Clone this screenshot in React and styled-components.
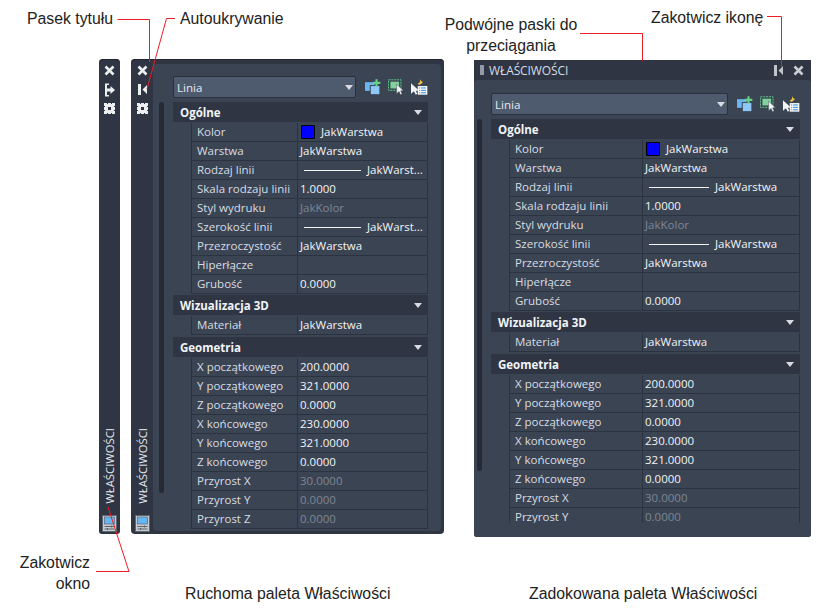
import React from "react";
import styled, { createGlobalStyle } from "styled-components";

const Global = createGlobalStyle`
  html, body { margin: 0; padding: 0; background: #fff; }
  body { font-family: "Liberation Sans", Arial, sans-serif; overflow: hidden; }
`;
const Stage = styled.div`position: relative; width: 822px; height: 610px; overflow: hidden; padding: 59px 0 0 99px; box-sizing: border-box; display: flex; align-items: flex-start;`;
const Strip = styled.div`width: 21px; height: 475px; background: #2f3543; border-radius: 4px 4px 3px 3px; box-shadow: inset 0 1px 0 #23262e; display: flex; flex-direction: column; align-items: center; padding: 2px 0 2px; box-sizing: border-box; margin-right: 11px; flex: none;`;
const IconSlots = styled.div`display: flex; flex-direction: column; align-items: center;`;
const Slot = styled.div`height: 19px; display: flex; align-items: center; justify-content: center;`;
const StripTitle = styled.div`margin-top: auto; writing-mode: vertical-rl; transform: rotate(180deg); color: #e6eaf0; font: 11.3px "Open Sans", sans-serif; margin-bottom: 11px; line-height: 21px; width: 21px; text-align: left;`;
const Floating = styled.div`width: 313px; height: 475px; background: #2f3543; border-radius: 4px; box-shadow: inset 0 1px 0 #23262e; display: flex; flex: none; margin-right: 30px;`;
const FloatingRail = styled.div`width: 22px; display: flex; flex-direction: column; align-items: center; padding: 2px 0 2px; box-sizing: border-box; flex: none;`;
const Docked = styled.div`width: 337px; height: 477px; margin-top: 1px; background: #2f3543; display: flex; flex-direction: column; flex: none; border-radius: 0 0 3px 3px;`;
const DockBar = styled.div`height: 20px; display: flex; align-items: center; padding: 0 7px 0 6px; flex: none; color: #d5dce6; font: 12px "Open Sans", sans-serif;`;
const Grip = styled.div`width: 4px; height: 10px; margin-right: 5px; background-image: radial-gradient(#9aa2ae 0.7px, transparent 0.8px); background-size: 2px 2px;`;
const DockTitle = styled.span`flex: 1; letter-spacing: -0.1px;`;
const DockAnchor = styled.span`display: flex; margin-right: 10px;`;
const Inner = styled.div`flex: 1; min-height: 0; background: #3b4453; border-radius: ${p => p.$radius}; position: relative; padding: ${p => p.$pad}; margin: ${p => p.$margin || 0}; display: flex; flex-direction: column; overflow: hidden;`;
const Track = styled.div`position: absolute; left: ${p => p.$x}px; top: ${p => p.$top}px; width: 5px; height: ${p => p.$h}px; background: #252a35; border-radius: 3px;`;
const ToolRow = styled.div`display: flex; align-items: center; height: 22px; flex: none; margin-bottom: 3px;`;
const Combo = styled.div`flex: 1; height: 22px; box-sizing: border-box; background: #4e5a6e; border: 1px solid #2a303c; border-radius: 2px; display: flex; align-items: center; padding: 0 2px 0 3px; color: #e4e9ef; font: 11.6px "Open Sans", sans-serif; justify-content: space-between;`;
const Arrow = styled.span`width: 0; height: 0; border-left: 4.5px solid transparent; border-right: 4.5px solid transparent; border-top: 5px solid #d7dce2; display: block;`;
const Tools = styled.div`display: flex; gap: 7px; margin-left: 9px; flex: none; width: 63px;`;
const List = styled.div`flex: 1; min-height: 0; overflow: hidden;`;
const Section = styled.div`height: 20px; margin-top: ${p => p.$gap || 1}px; background: #2f3543; display: flex; align-items: center; justify-content: space-between; padding: 0 6px 0 7px; color: #f1f4f7; font: 700 11.5px "Open Sans", sans-serif;`;
const Rows = styled.div`padding: 1px 0 0 18px;`;
const Row = styled.div`display: grid; grid-template-columns: ${p => p.$label}px 1fr; height: 19px; box-sizing: border-box; border-bottom: 1px solid #2c3340; border-left: 1px solid #2c3340; border-right: 1px solid #2c3340; font: 11.5px "Open Sans", sans-serif; color: #d8dde3; line-height: 18px;`;
const Label = styled.div`padding-left: 5px; border-right: 1px solid #2c3340; white-space: nowrap; overflow: hidden;`;
const Value = styled.div`padding-left: 2px; display: flex; align-items: center; white-space: nowrap; overflow: hidden; color: ${p => (p.$dim ? "#7d8794" : "#f2f4f6")};`;
const Swatch = styled.span`width: 14px; height: 14px; background: #0000ff; border: 1px solid #000; box-sizing: border-box; border-radius: 1px; margin: 0 6px 0 1px; flex: none;`;
const LineMark = styled.span`width: ${p => p.$w}px; height: 1px; background: #f2f4f6; margin: 0 6px 0 4px; flex: none;`;
const Note = styled.div`position: absolute; left: ${p => p.$x}px; top: ${p => p.$y}px; width: ${p => p.$w}px; text-align: ${p => p.$align || "left"}; font: 15.8px/21px "Liberation Sans", Arial, sans-serif; color: #222;`;
const Leaders = styled.svg`position: absolute; left: 0; top: 0; pointer-events: none;`;
const Caption = styled.div`position: absolute; top: 583px; left: ${p => p.$x}px; font: 15.8px/21px "Liberation Sans", Arial, sans-serif; color: #222; white-space: nowrap;`;

const Close = ({ c = "#eceef0" }) => (<svg width="11" height="11" viewBox="0 0 11 11"><path d="M1.500 1.500l8 8M9.500 1.500l-8 8" stroke={c} strokeWidth="2.600" /></svg>);
const Pin = () => (<svg width="12" height="14" viewBox="0 0 12 14"><path d="M1 0.500h4v1.500H3v3.500h3.500V3L11 7 6.500 11V8.500H3V12h2v1.500H1z" fill="#eceef0" /></svg>);
const Anchor = ({ c = "#eceef0" }) => (<svg width="9" height="11" viewBox="0 0 9 11"><path d="M0 0h3v11H0zM9 1v9L4.500 5.500z" fill={c} /></svg>);
const Gear = () => (<svg width="11" height="11" viewBox="0 0 11 11"><path fill="#eceef0" fillRule="evenodd" d="M0 0h3v1h1V0h3v1h1V0h3v3h-1v1h1v3h-1v1h1v3H8v-1H7v1H4v-1H3v1H0V8h1V7H0V4h1V3H0zM4 4v3h3V4z" /></svg>);
const DockIcon = () => (<svg width="15" height="17" viewBox="0 0 15 17"><rect x="0.500" y="0.500" width="14" height="16" fill="#c7cbce" stroke="#5d6570"/><rect x="2.500" y="2" width="10" height="7" fill="#67b6f4" stroke="#4d5868" strokeWidth="0.600"/><path d="M2.500 11.500h10M2.500 14h10" stroke="#5a626e"/><path d="M9.500 10.500v2M5.500 13v2" stroke="#5a626e"/></svg>);
const AddIcon = () => (<svg width="17" height="16" viewBox="0 0 17 16"><rect x="0" y="3" width="10" height="9" fill="#6cb6f0"/><rect x="5.500" y="6.500" width="10" height="9.500" fill="#8ec8f6" stroke="#3b4453"/><path d="M12 0v7.500M8 3.700h8" stroke="#66d486" strokeWidth="2.200"/></svg>);
const SelectIcon = () => (<svg width="16" height="16" viewBox="0 0 16 16"><rect x="0.500" y="0.500" width="13" height="11" fill="none" stroke="#5fd08a" strokeDasharray="2 1"/><rect x="2.500" y="2.500" width="9" height="7" fill="#82d09e"/><path d="M9 5v10l2.500-2.300 1.500 3.300 1.700-.8-1.500-3.200H16z" fill="#f2f4f6" stroke="#3b4453" strokeWidth="0.500"/></svg>);
const QuickIcon = () => (<svg width="18" height="16" viewBox="0 0 18 16"><path d="M0 4v11l3-2.500 2 3.500 1.500-1L5 12h3.500z" fill="#f2f4f6"/><path d="M10 0l.8 2 1.700.8-2 2.200L8.500 6 7 4.500 9 3z" fill="#f0c040"/><rect x="7" y="7" width="10" height="9" fill="#f4f6f8"/><path d="M10.500 9h5M10.500 11.500h5M10.500 14h5M8.500 9h1M8.500 11.500h1M8.500 14h1" stroke="#2a86d8"/></svg>);

const R = ({ label, l, children, dim }) => (
  <Row $label={label}><Label>{l}</Label><Value $dim={dim}>{children}</Value></Row>
);

const Props = ({ label, narrow }) => {
  const txt = narrow ? "JakWarst..." : "JakWarstwa";
  const w = narrow ? 57 : 60;
  return (
    <List>
      <Section>Ogólne<Arrow /></Section>
      <Rows>
        <R label={label} l="Kolor"><Swatch />JakWarstwa</R>
        <R label={label} l="Warstwa">JakWarstwa</R>
        <R label={label} l="Rodzaj linii"><LineMark $w={w} />{txt}</R>
        <R label={label} l="Skala rodzaju linii">1.0000</R>
        <R label={label} l="Styl wydruku" dim>JakKolor</R>
        <R label={label} l="Szerokość linii"><LineMark $w={w} />{txt}</R>
        <R label={label} l="Przezroczystość">JakWarstwa</R>
        <R label={label} l="Hiperłącze" />
        <R label={label} l="Grubość">0.0000</R>
      </Rows>
      <Section>Wizualizacja 3D<Arrow /></Section>
      <Rows><R label={label} l="Materiał">JakWarstwa</R></Rows>
      <Section $gap={2}>Geometria<Arrow /></Section>
      <Rows>
        <R label={label} l="X początkowego">200.0000</R>
        <R label={label} l="Y początkowego">321.0000</R>
        <R label={label} l="Z początkowego">0.0000</R>
        <R label={label} l="X końcowego">230.0000</R>
        <R label={label} l="Y końcowego">321.0000</R>
        <R label={label} l="Z końcowego">0.0000</R>
        <R label={label} l="Przyrost X" dim>30.0000</R>
        <R label={label} l="Przyrost Y" dim>0.0000</R>
        {narrow && <R label={label} l="Przyrost Z" dim>0.0000</R>}
      </Rows>
    </List>
  );
};
const Toolbar = () => (
  <ToolRow><Combo>Linia<Arrow /></Combo><Tools><AddIcon /><SelectIcon /><QuickIcon /></Tools></ToolRow>
);

export default function App() {
  return (
    <Stage>
      <Global />
      <Strip>
        <IconSlots><Slot><Close /></Slot><Slot><Pin /></Slot><Slot><Gear /></Slot></IconSlots>
        <StripTitle>WŁAŚCIWOŚCI</StripTitle>
        <DockIcon />
      </Strip>
      <Floating>
        <FloatingRail>
          <IconSlots><Slot><Close /></Slot><Slot><Anchor /></Slot><Slot><Gear /></Slot></IconSlots>
          <StripTitle>WŁAŚCIWOŚCI</StripTitle>
          <DockIcon />
        </FloatingRail>
        <Inner $pad="12px 13px 1px 20px" $margin="5px 3px 3px 0" $radius="4px">
          <Track $x={6} $top={38} $h={391} />
          <Toolbar />
          <Props label={106} narrow />
        </Inner>
      </Floating>
      <Docked>
        <DockBar>
          <Grip />
          <DockTitle>WŁAŚCIWOŚCI</DockTitle>
          <DockAnchor><Anchor c="#bfc4ca" /></DockAnchor>
          <Close c="#c9ccd0" />
        </DockBar>
        <Inner $pad="13px 11px 14px 17px" $radius="4px 4px 3px 3px">
          <Track $x={3} $top={39} $h={352} />
          <Toolbar />
          <Props label={133} />
        </Inner>
      </Docked>
      <Leaders width="822" height="610" viewBox="0 0 822 610">
        <g fill="none" stroke="#ee1c25" strokeWidth="1">
          <path d="M117.500 19.500H149.500V62" />
          <path d="M175 18.500H166.500L147 89" />
          <path d="M580 33.500H642.500V61" />
          <path d="M767 16.500H781.500V68" />
          <path d="M108 507L129 571.500H96" />
        </g>
      </Leaders>
      <Note $x={27} $y={8} $w={95}>Pasek tytułu</Note>
      <Note $x={180} $y={8} $w={115}>Autoukrywanie</Note>
      <Note $x={431} $y={14} $w={160} $align="center">Podwójne paski do przeciągania</Note>
      <Note $x={651} $y={7} $w={125}>Zakotwicz ikonę</Note>
      <Note $x={2} $y={552} $w={88} $align="right">Zakotwicz okno</Note>
      <Caption $x={185}>Ruchoma paleta Właściwości</Caption>
      <Caption $x={529}>Zadokowana paleta Właściwości</Caption>
    </Stage>
  );
}
